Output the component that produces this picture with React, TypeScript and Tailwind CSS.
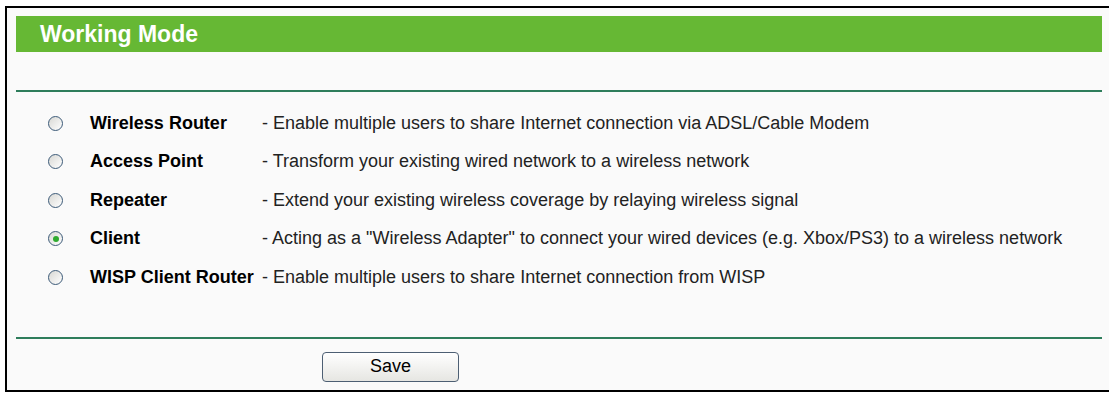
import React, { useState } from "react";

const modes = [
  { value: "router", label: "Wireless Router", desc: "- Enable multiple users to share Internet connection via ADSL/Cable Modem" },
  { value: "ap", label: "Access Point", desc: "- Transform your existing wired network to a wireless network" },
  { value: "repeater", label: "Repeater", desc: "- Extend your existing wireless coverage by relaying wireless signal" },
  { value: "client", label: "Client", desc: '- Acting as a "Wireless Adapter" to connect your wired devices (e.g. Xbox/PS3) to a wireless network' },
  { value: "wisp", label: "WISP Client Router", desc: "- Enable multiple users to share Internet connection from WISP" },
];

function Radio({ checked }: { checked: boolean }) {
  return (
    <span className="w-[15px] h-[15px] rounded-full border border-[#3c5a78] bg-gradient-to-br from-[#d8d8d4] to-[#ffffff] flex items-center justify-center shrink-0">
      {checked && <span className="w-[6px] h-[6px] rounded-full bg-[#2eaa2e]" />}
    </span>
  );
}

export default function App() {
  const [mode, setMode] = useState("client");

  return (
    <div className="w-[1109px] h-[393px] bg-white pt-[6px] pl-[5px] font-['Liberation_Sans',Arial,sans-serif] overflow-hidden">
      <div className="w-[1110px] h-[386px] border-l-2 border-t-2 border-b-2 border-black bg-[#fafafa] pt-[8px] pl-[9px]">
        {/* Header */}
        <div className="w-[1086px] h-[36px] bg-[#66b834] flex items-center pl-[24px]">
          <h1 className="text-white font-bold text-[23px]">Working Mode</h1>
        </div>

        <div className="w-[1086px] h-[2px] bg-[#2e7d5b] mt-[38px]" />

        {/* Modes */}
        <div className="flex flex-col pt-[12px]">
          {modes.map((m) => (
            <label
              key={m.value}
              className="flex items-center h-[38.5px] cursor-pointer text-[18px] text-black"
              onClick={() => setMode(m.value)}
            >
              <span className="w-[42px] pl-[32px] box-content flex">
                <Radio checked={mode === m.value} />
              </span>
              <span className="w-[172px] font-bold">{m.label}</span>
              <span className="text-[#222]">{m.desc}</span>
            </label>
          ))}
        </div>

        <div className="w-[1086px] h-[2px] bg-[#2e7d5b] mt-[40px]" />

        <div className="pl-[306px] pt-[13px]">
          <button className="w-[137px] h-[30px] rounded-[4px] border border-[#4d5f73] bg-gradient-to-b from-white to-[#e6e6e2] text-[18px] text-black">
            Save
          </button>
        </div>
      </div>
    </div>
  );
}
